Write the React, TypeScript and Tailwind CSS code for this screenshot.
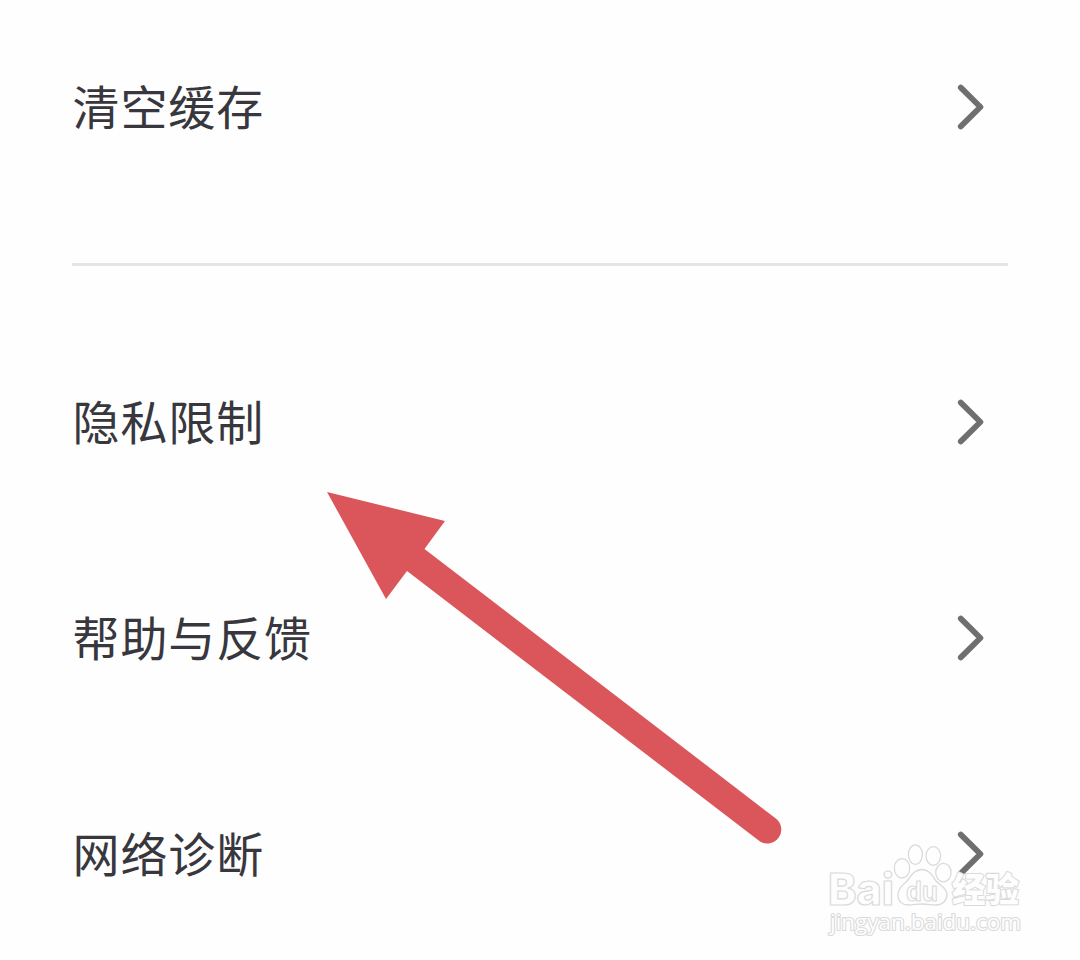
const groups = [["清空缓存"], ["隐私限制", "帮助与反馈", "网络诊断"]];

function Chevron() {
    return (
        <svg className="mr-6 h-12 w-7 shrink-0" viewBox="0 0 28 48" fill="none" stroke="#6f6f70" strokeWidth="5.8" strokeLinecap="round" strokeLinejoin="round">
            <path d="M4.8 4.6 L24.4 24 L4.8 43.4" />
        </svg>
    );
}

function Row({ label }: { label: string }) {
    return (
        <div className="flex h-[216px] shrink-0 items-center justify-between">
            <span className="mb-[4px] ml-[0.5px] text-[47px] leading-[70px] tracking-[0.9px] text-[#38373d]">{label}</span>
            <Chevron />
        </div>
    );
}

function Arrow() {
    return (
        <svg className="absolute top-[480px] left-[310px] h-[380px] w-[490px]" viewBox="310 480 490 380">
            <path fill="#db565b" d="M327 492 L445 521 L424.5 549 L776.5 819 A14 14 0 0 1 760 841.5 L407 571 L386 599 Z" />
        </svg>
    );
}

function Watermark() {
    return (
        <svg className="absolute top-[835px] left-[820px] h-[110px] w-[210px]" viewBox="820 835 210 110" fill="#fefefe" stroke="#dadada" strokeWidth="1.3" strokeLinejoin="round">
            <ellipse cx="902" cy="868.3" rx="7.7" ry="9.7" />
            <ellipse cx="915.4" cy="854.6" rx="7" ry="9.8" />
            <ellipse cx="933.3" cy="856" rx="7.3" ry="9.3" />
            <ellipse cx="943.4" cy="872.6" rx="7.7" ry="9.3" />
            <path d="M922 869.5 C914 869.5 911 876 907 881 C903 885 898 888 898 895 C898 902 903 905 908 905 C914 905 917 904 922 904 C928 904 931 905 936 905 C943 905 947 900 947 894 C946.5 888 940 885 936 881 C932 875 929 869.5 922 869.5 Z" />
            <text x="828" y="904.5" textLength="66" lengthAdjust="spacingAndGlyphs" fontFamily="Inter, sans-serif" fontSize="44" fontWeight="800" strokeWidth="1.2">Bai</text>
            <text x="906" y="900.5" textLength="32" lengthAdjust="spacingAndGlyphs" fontFamily="Liberation Sans, sans-serif" fontSize="27" fontWeight="700" strokeWidth="1.1">du</text>
            <text x="952" y="902" textLength="67" lengthAdjust="spacingAndGlyphs" fontFamily="Noto Sans CJK SC, sans-serif" fontSize="34" fontWeight="900" strokeWidth="2.2" paintOrder="stroke">经验</text>
            <text x="830" y="930" textLength="191" lengthAdjust="spacingAndGlyphs" fontFamily="Open Sans, sans-serif" fontSize="21.5" strokeWidth="2.2" paintOrder="stroke">jingyan.baidu.com</text>
        </svg>
    );
}

export default function App() {
    return (
        <div lang="zh-CN" className="relative h-[960px] w-[1080px] overflow-hidden bg-[#fefefe] px-[72px] font-['Noto_Sans_CJK_SC',sans-serif]">
            <div className="-mt-px flex flex-col">
                {groups.map((rows, i) => (
                    <div key={i} className={i > 0 ? "mt-12 border-t-[3px] border-[#e5e5e5] pt-12" : ""}>
                        {rows.map((label) => (
                            <Row key={label} label={label} />
                        ))}
                    </div>
                ))}
            </div>
            <Arrow />
            <Watermark />
        </div>
    );
}
